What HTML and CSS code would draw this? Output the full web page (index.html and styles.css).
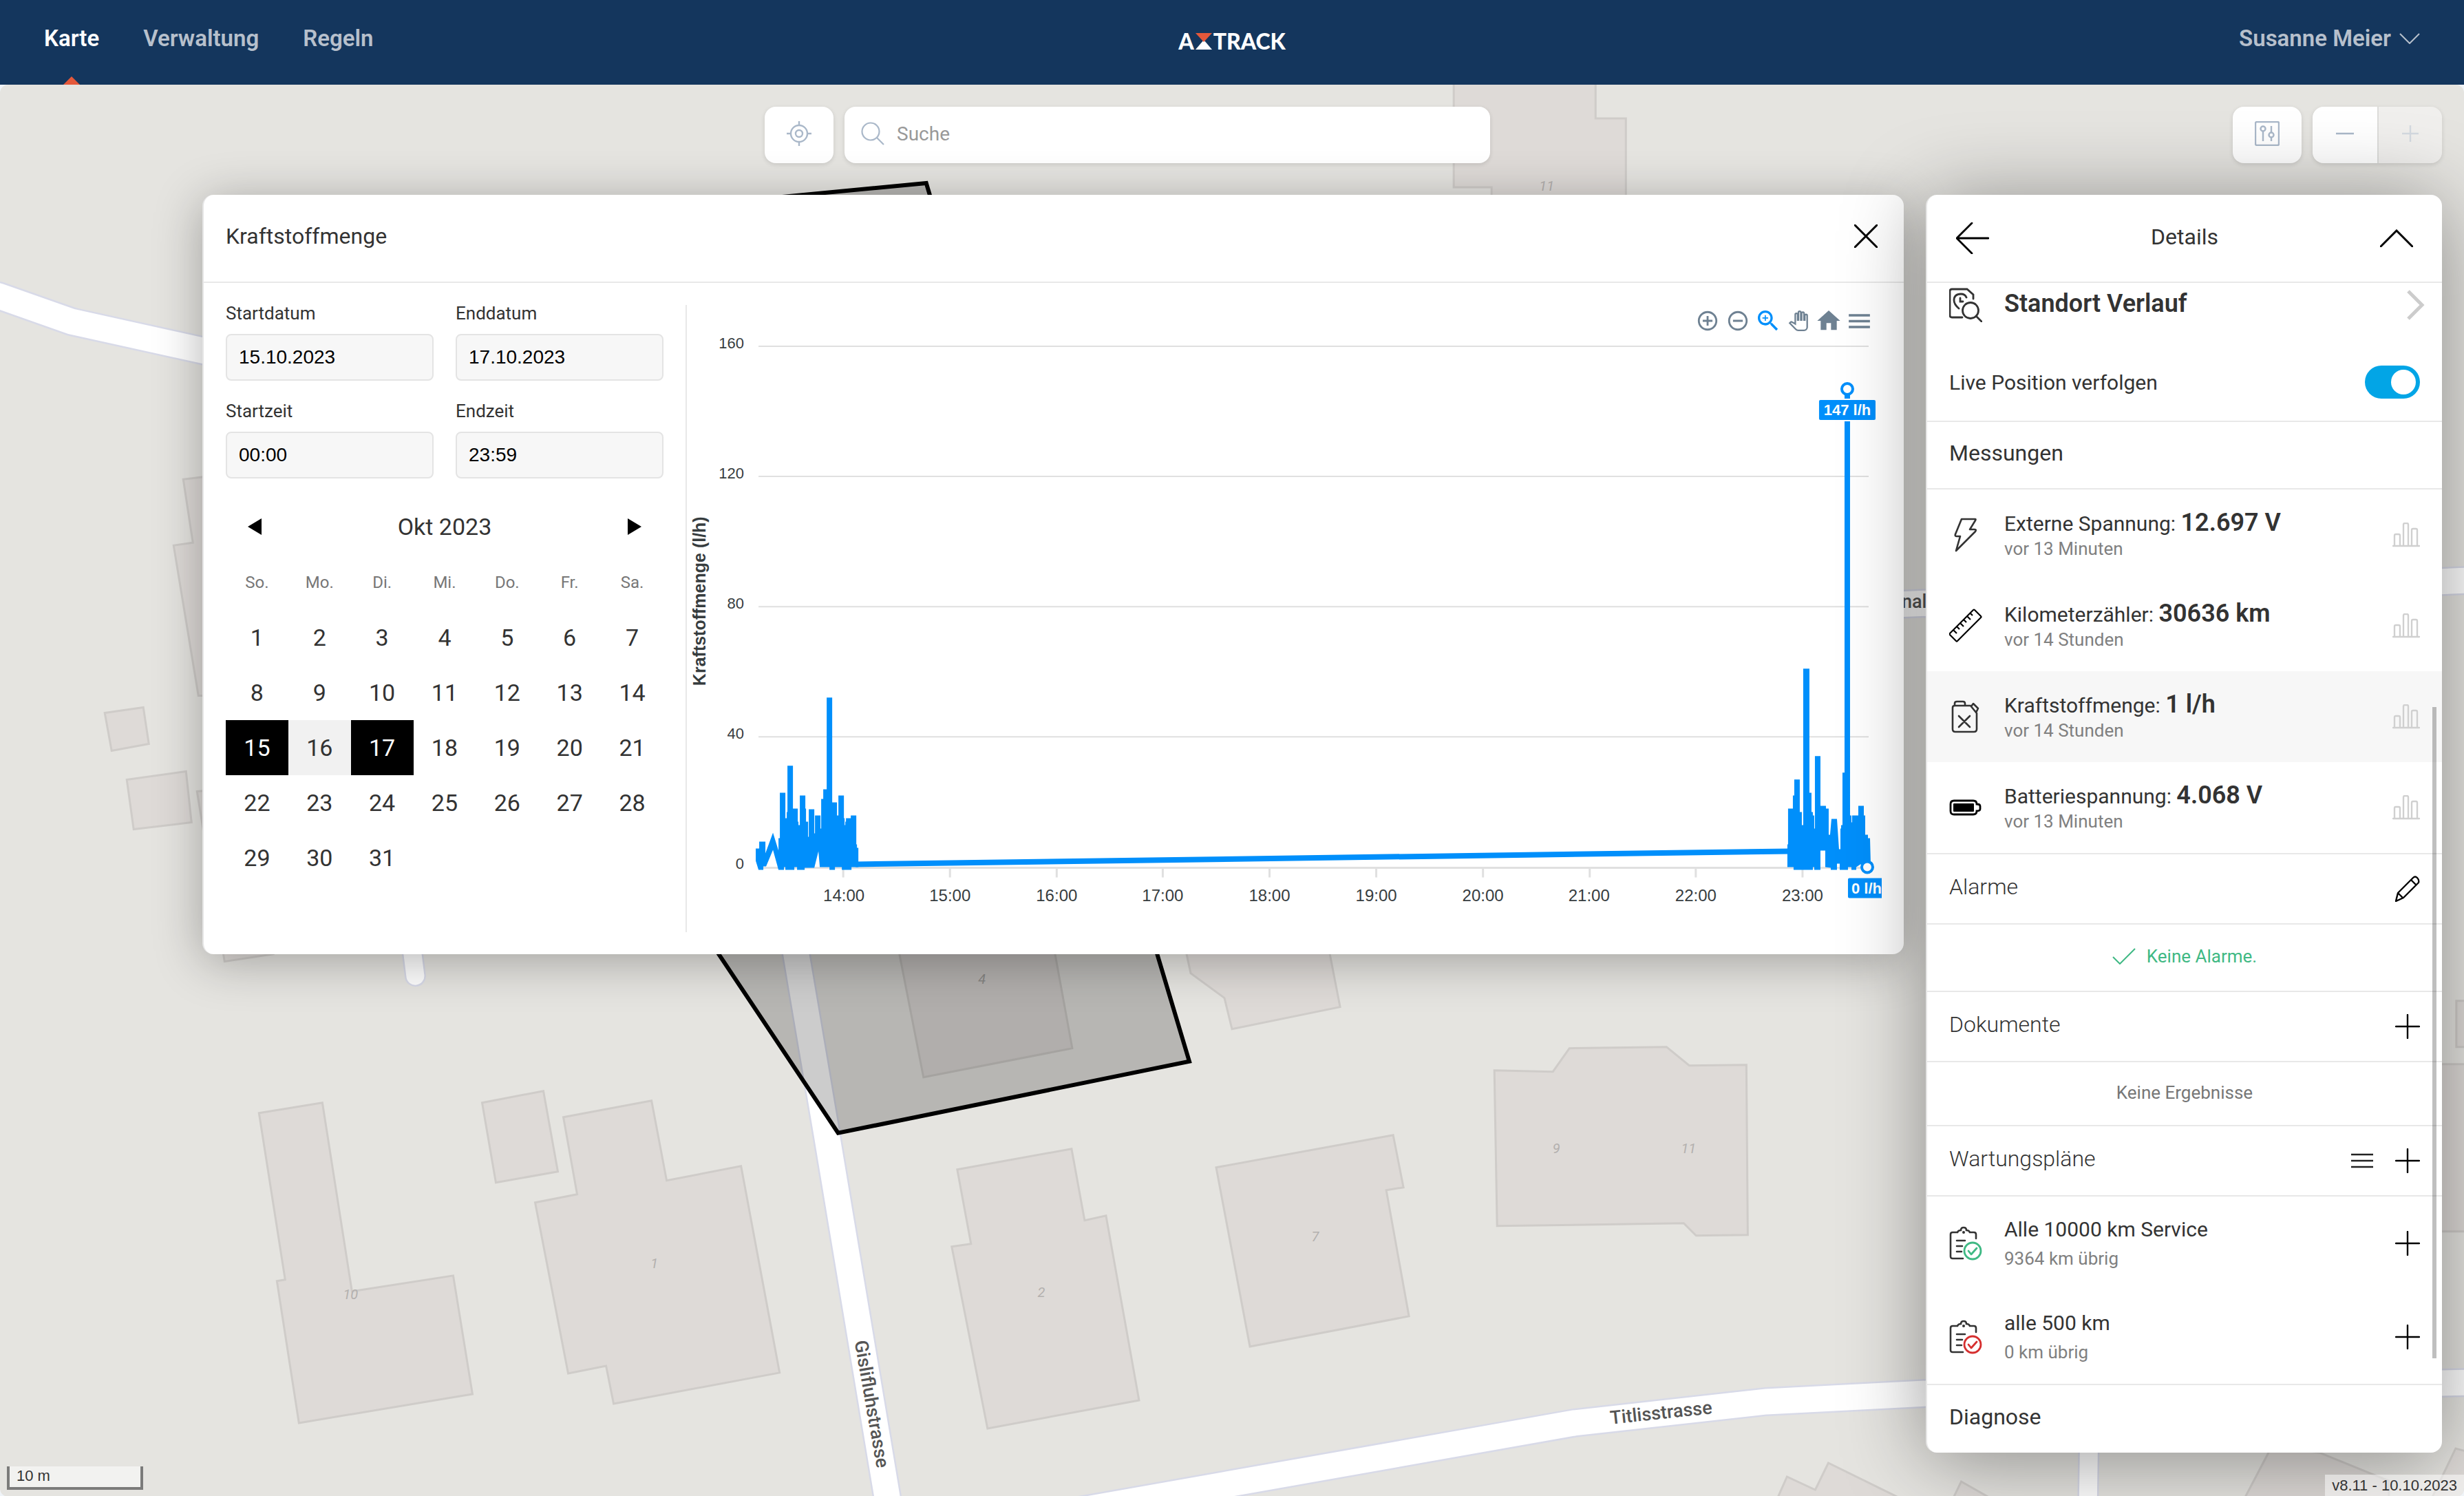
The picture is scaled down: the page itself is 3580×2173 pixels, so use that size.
FILE: index.html
```html
<!DOCTYPE html>
<html lang="de">
<head>
  <meta charset="UTF-8">
  <meta name="viewport" content="width=device-width, initial-scale=1">
  <title>AXTRACK</title>
  <link rel="stylesheet" href="styles.css">
</head>
<body>

<!-- icons used more than once -->
<svg class="sprite" aria-hidden="true">
  <symbol id="icon-plus" viewBox="0 0 36 36"><path d="M18 1v34M1 18h34" fill="none" stroke="currentColor" stroke-width="2.4" stroke-linecap="round"/></symbol>
  <symbol id="icon-bars" viewBox="0 0 40 36"><path d="M1 34h38M3 33V19q0-2 2-2h4q2 0 2 2v14M16 33V3q0-2 2-2h3q2 0 2 2v30M28 33V11q0-2 2-2h4q2 0 2 2v22" fill="none" stroke="currentColor" stroke-width="2.4" stroke-linecap="round"/></symbol>
  <symbol id="icon-clipboard" viewBox="0 0 48 50"><path d="M20 47H5q-3 0-3-3V12q0-3 3-3h7q1-3 5-3 0-4 4-4t4 4q4 0 5 3h6q3 0 3 3v6M11 21h12M11 29h8M11 37h7" fill="none" stroke="#333" stroke-width="2.6" stroke-linecap="round"/><circle cx="21" cy="9" r="2" fill="#333"/><circle cx="34" cy="36" r="12" fill="#fff" stroke="currentColor" stroke-width="2.8"/><path d="M28 36l4 5 8-9" fill="none" stroke="currentColor" stroke-width="2.8" stroke-linecap="round" stroke-linejoin="round"/></symbol>
</svg>

<header class="topbar">
  <nav class="nav">
    <a class="nav-link active" href="#karte">Karte</a>
    <a class="nav-link" href="#verwaltung">Verwaltung</a>
    <a class="nav-link" href="#regeln">Regeln</a>
  </nav>
  <a class="logo" href="#" aria-label="AXTRACK">
    <span>A</span>
    <svg width="24" height="24" viewBox="0 0 24 24"><path d="M0 24h24L12 10z" fill="#fff"/><path d="M0 0h24L12 13z" fill="#e4583a"/></svg>
    <span>TRACK</span>
  </a>
  <button class="user">Susanne Meier
    <svg width="30" height="16" viewBox="0 0 30 16"><path d="M1 1l14 14L29 1" fill="none" stroke="currentColor" stroke-width="2"/></svg>
  </button>
</header>

<main class="map-view">
  <svg class="map" viewBox="0 123 3580 2050" preserveAspectRatio="xMidYMid slice" aria-hidden="true">
    <rect y="123" width="3580" height="2050" fill="#e5e4e0"/>
    <!-- Gebäude -->
    <g class="building">
      <path d="M2112 100V272H2167V500H2362V172H2318V100z"/>
      <path d="M267 696L400 680V1010H289L253 792 281 788z"/>
      <path d="M287 1149L400 1140 398 1385 327 1396z"/>
      <path d="M153 1035L209 1027 217 1080 163 1090z"/>
      <path d="M185 1132L271 1120 279 1194 195 1204z"/>
      <path d="M377 1616L469 1601 512 1875 659 1852 687 2024 435 2066 403 1860 415 1858z"/>
      <path d="M701 1601L790 1584 811 1701 721 1717z"/>
      <path d="M819 1622L947 1598 969 1714 1077 1693 1133 1993 892 2038 881 1983 826 1994 778 1746 839 1734z"/>
      <path d="M1300 1340L1307 1385 1342 1564 1558 1522 1533 1385 1525 1340z"/>
      <path d="M1715 1340L1724 1385 1730 1413 1779 1449 1790 1494 1947 1462 1932 1385 1925 1340z"/>
      <path d="M1391 1698L1557 1668 1576 1772 1607 1765 1655 2033 1435 2074 1383 1810 1411 1806z"/>
      <path d="M1767 1695L2024 1648 2039 1724 2014 1728 2047 1911 1816 1955z"/>
      <path d="M2171 1554L2256 1556 2280 1522 2421 1520 2454 1547 2537 1546 2539 1793 2464 1794 2446 1776 2175 1780z"/>
      <path d="M2580 2180L2596 2144 2637 2163 2656 2124 2770 2180z"/>
      <path d="M2835 2180L2849 2151 2900 2180z"/>
      <path d="M3258 2180L3300 2100 3369 2109 3470 2150 3470 2180z"/>
      <path d="M3530 2180L3567 2103 3600 2112V2180z"/>
      <path d="M3568 1453H3600V1520H3568z"/>
      <path d="M3500 1545H3600V1788H3500z"/>
    </g>
    <!-- Strassen -->
    <g class="road-edge">
      <path d="M-20 425L0 430 105 467 295 509 400 532M2700 880L3600 842M1500 2205L2287 2066 2566 2035 2799 2023 3600 2007M1140 1280L1157 1385 1201 1645 1292 2190"/>
      <path class="narrow" d="M590 1320L600 1385 604 1417M3035 2060L3033 2190"/>
    </g>
    <g class="road">
      <path d="M-20 425L0 430 105 467 295 509 400 532M2700 880L3600 842M1500 2205L2287 2066 2566 2035 2799 2023 3600 2007M1140 1280L1157 1385 1201 1645 1292 2190"/>
      <path class="narrow" d="M590 1320L600 1385 604 1417M3035 2060L3033 2190"/>
    </g>
    <path class="geofence" d="M1346 266L1728 1541 1218 1645 360 360z"/>
    <g class="house-number">
      <text x="2247" y="277">11</text>
      <text x="510" y="1886">10</text>
      <text x="951" y="1841">1</text>
      <text x="1427" y="1428" class="inside">4</text>
      <text x="1513" y="1883">2</text>
      <text x="1911" y="1802">7</text>
      <text x="2261" y="1674">9</text>
      <text x="2453" y="1674">11</text>
    </g>
    <g class="street-name">
      <text transform="translate(1258 2040) rotate(80)">Gislifluhstrasse</text>
      <text transform="translate(2414 2060) rotate(-6)">Titlisstrasse</text>
      <text x="2788" y="883">nale</text>
    </g>
  </svg>

  <div class="toolbar">
    <span></span>
    <div class="toolbar-group">
      <button class="tool" aria-label="Standort">
        <svg width="36" height="36" viewBox="0 0 36 36" fill="none" stroke="currentColor" stroke-width="2.4"><circle cx="18" cy="18" r="12"/><circle cx="18" cy="18" r="5"/><path d="M18 0v6M18 30v6M0 18h6M30 18h6"/></svg>
      </button>
      <label class="search">
        <svg width="34" height="34" viewBox="0 0 34 34" fill="none" stroke="currentColor" stroke-width="2.2"><circle cx="14" cy="14" r="12.5"/><path d="M23 23l10 10"/></svg>
        <input type="text" placeholder="Suche" aria-label="Suche">
      </label>
    </div>
    <div class="toolbar-group">
      <button class="tool" aria-label="Filter">
        <svg width="36" height="36" viewBox="0 0 36 36" fill="none" stroke="currentColor" stroke-width="2.4"><rect x="1" y="1" width="34" height="34" rx="2"/><circle cx="12" cy="11" r="3.5"/><path d="M12 15v14M24 7v9M24 24v5"/><circle cx="24" cy="20" r="3.5"/></svg>
      </button>
      <div class="zoom">
        <button aria-label="Verkleinern"><svg width="26" height="26" viewBox="0 0 26 26"><path d="M0 13h26" stroke="currentColor" stroke-width="2.4"/></svg></button>
        <button aria-label="Vergrössern" disabled><svg width="24" height="24" viewBox="0 0 24 24"><path d="M0 12h24M12 0v24" stroke="currentColor" stroke-width="2.4"/></svg></button>
      </div>
    </div>
  </div>

  <div class="workspace">
    <section class="dialog">
      <div class="dialog-head">
        <h2>Kraftstoffmenge</h2>
        <button class="icon-btn" aria-label="Schliessen"><svg width="34" height="34" viewBox="0 0 34 34"><path d="M1 1l32 32M33 1L1 33" stroke="currentColor" stroke-width="3" stroke-linecap="round"/></svg></button>
      </div>
      <div class="dialog-body">
        <div class="range">
          <div class="fields">
            <label for="startDatum">Startdatum<input type="text" id="startDatum" value="15.10.2023"></label>
            <label for="endDatum">Enddatum<input type="text" id="endDatum" value="17.10.2023"></label>
            <label for="startZeit">Startzeit<input type="text" id="startZeit" value="00:00"></label>
            <label for="endZeit">Endzeit<input type="text" id="endZeit" value="23:59"></label>
          </div>
          <div class="month">
            <button class="icon-btn" aria-label="Vorheriger Monat"><svg width="20" height="24" viewBox="0 0 20 24"><path d="M20 0v24L0 12z"/></svg></button>
            <span>Okt 2023</span>
            <button class="icon-btn" aria-label="Nächster Monat"><svg width="20" height="24" viewBox="0 0 20 24"><path d="M0 0v24l20-12z"/></svg></button>
          </div>
          <table class="calendar">
            <thead>
              <tr><th>So.</th><th>Mo.</th><th>Di.</th><th>Mi.</th><th>Do.</th><th>Fr.</th><th>Sa.</th></tr>
            </thead>
            <tbody>
              <tr><td><button>1</button></td><td><button>2</button></td><td><button>3</button></td><td><button>4</button></td><td><button>5</button></td><td><button>6</button></td><td><button>7</button></td></tr>
              <tr><td><button>8</button></td><td><button>9</button></td><td><button>10</button></td><td><button>11</button></td><td><button>12</button></td><td><button>13</button></td><td><button>14</button></td></tr>
              <tr><td><button class="selected">15</button></td><td><button class="between">16</button></td><td><button class="selected">17</button></td><td><button>18</button></td><td><button>19</button></td><td><button>20</button></td><td><button>21</button></td></tr>
              <tr><td><button>22</button></td><td><button>23</button></td><td><button>24</button></td><td><button>25</button></td><td><button>26</button></td><td><button>27</button></td><td><button>28</button></td></tr>
              <tr><td><button>29</button></td><td><button>30</button></td><td><button>31</button></td><td></td><td></td><td></td><td></td></tr>
            </tbody>
          </table>
        </div>

        <div class="chart">
          <div class="chart-tools">
            <button aria-label="Zoom in"><svg width="34" height="34" viewBox="0 0 24 24"><path d="M13 7h-2v4H7v2h4v4h2v-4h4v-2h-4V7zm-1-5C6.48 2 2 6.48 2 12s4.48 10 10 10 10-4.48 10-10S17.52 2 12 2zm0 18c-4.41 0-8-3.59-8-8s3.59-8 8-8 8 3.59 8 8-3.59 8-8 8z"/></svg></button>
            <button aria-label="Zoom out"><svg width="34" height="34" viewBox="0 0 24 24"><path d="M7 11v2h10v-2H7zm5-9C6.48 2 2 6.48 2 12s4.48 10 10 10 10-4.48 10-10S17.52 2 12 2zm0 18c-4.41 0-8-3.59-8-8s3.59-8 8-8 8 3.59 8 8-3.59 8-8 8z"/></svg></button>
            <button class="on" aria-label="Auswahl zoomen"><svg width="40" height="40" viewBox="0 0 24 24"><path d="M15.5 14h-.79l-.28-.27C15.41 12.59 16 11.11 16 9.5 16 5.91 13.09 3 9.5 3S3 5.91 3 9.5 5.91 16 9.5 16c1.61 0 3.09-.59 4.23-1.57l.27.28v.79l5 4.99L20.49 19l-4.99-5zm-6 0C7.01 14 5 11.99 5 9.5S7.01 5 9.5 5 14 7.01 14 9.5 11.99 14 9.5 14z"/><path d="M12 10h-2v2H9v-2H7V9h2V7h1v2h2v1z"/></svg></button>
            <button aria-label="Verschieben"><svg width="30" height="30" viewBox="-1 -1 26 26"><path fill="#fff" stroke="currentColor" stroke-width="2" d="M23 5.5V20c0 2.2-1.8 4-4 4h-7.3c-1.08 0-2.1-.43-2.85-1.19L1 14.83s1.26-1.23 1.3-1.25c.22-.19.49-.29.79-.29.22 0 .42.06.6.16.04.01 4.31 2.46 4.31 2.46V4c0-.83.67-1.5 1.5-1.5S11 3.17 11 4v7h1V1.5c0-.83.67-1.5 1.5-1.5S15 .67 15 1.5V11h1V2.5c0-.83.67-1.5 1.5-1.5s1.5.67 1.5 1.5V11h1V5.5c0-.83.67-1.5 1.5-1.5s1.5.67 1.5 1.5z"/></svg></button>
            <button aria-label="Zurücksetzen"><svg width="40" height="40" viewBox="0 0 24 24"><path d="M10 20v-6h4v6h5v-8h3L12 3 2 12h3v8z"/></svg></button>
            <button aria-label="Menü"><svg width="41" height="41" viewBox="0 0 24 24"><path d="M3 18h18v-2H3v2zm0-5h18v-2H3v2zm0-7v2h18V6H3z"/></svg></button>
          </div>
          <svg class="plot" viewBox="999 479 1735 874" role="img" aria-label="Kraftstoffmenge (l/h)">
            <path class="grid" d="M1103 503H2715M1103 692H2715M1103 881H2715M1103 1070H2715"/>
            <path class="axis" d="M1103 1260H2715M1226 1260v14M1381 1260v14M1536 1260v14M1690 1260v14M1845 1260v14M2000 1260v14M2155 1260v14M2310 1260v14M2464 1260v14M2619 1260v14"/>
            <g class="y-label">
              <text x="1082" y="506">160</text>
              <text x="1082" y="695">120</text>
              <text x="1082" y="884">80</text>
              <text x="1082" y="1073">40</text>
              <text x="1082" y="1262">0</text>
            </g>
            <g class="x-label">
              <text x="1227" y="1309">14:00</text>
              <text x="1381" y="1309">15:00</text>
              <text x="1536" y="1309">16:00</text>
              <text x="1690" y="1309">17:00</text>
              <text x="1845" y="1309">18:00</text>
              <text x="2000" y="1309">19:00</text>
              <text x="2155" y="1309">20:00</text>
              <text x="2309" y="1309">21:00</text>
              <text x="2464" y="1309">22:00</text>
              <text x="2619" y="1309">23:00</text>
            </g>
            <text class="y-title" transform="translate(1026 873) rotate(-90)">Kraftstoffmenge (l/h)</text>
            <path class="series-line" d="M1244 1255L2600 1236"/>
            <path class="series" d="M1099 1250V1232H1104V1222H1113V1239L1124 1209 1132 1235V1217H1134V1151H1142V1188H1144V1179H1145V1112H1153V1174H1160V1193H1161V1198H1163V1155H1171V1174H1172V1193H1175V1215H1176V1175H1184V1210H1185V1184H1193V1203H1194V1160H1197V1146H1202V1013H1210V1165H1217V1184H1219V1155H1227V1188H1228V1198H1229V1193H1230V1188H1237V1184H1245V1226H1246V1231H1248V1259H1238V1263H1224V1259H1214V1263H1206V1259H1192L1190 1236 1184 1260H1170V1263H1159V1259H1155V1263H1142V1259H1140V1263H1132L1124 1234 1114 1258H1110V1263H1103z"/>
            <path class="series" d="M2597 1259V1226H2598V1174H2605V1155H2607V1132H2615V1179H2618V1198H2620V971H2629V1151H2632V1179H2634V1184H2636V1203H2637V1098H2645V1170H2653V1174H2657V1212H2659L2661 1189H2669L2672 1233H2674V1203H2675V1198H2677V1122H2680V566H2688V1184H2690V1194H2691V1184H2700V1170H2708V1184H2710V1212H2714V1217H2717L2718 1255 2703 1255 2697 1259V1263H2690V1259H2685V1263H2673V1254H2669V1263H2660V1260L2652 1259V1235H2645V1263H2636V1259H2634V1263H2606V1259z"/>
            <g class="marker">
              <circle cx="2684" cy="565" r="8"/>
              <rect x="2642" y="580" width="84" height="31" rx="3"/>
              <text x="2684" y="603">147 l/h</text>
              <circle cx="2713" cy="1259" r="8"/>
              <rect x="2684" y="1274" width="60" height="31" rx="3"/>
              <text x="2712" y="1298">0 l/h</text>
            </g>
          </svg>
        </div>
      </div>
    </section>

    <aside class="panel">
      <div class="panel-head">
        <button class="icon-btn" aria-label="Zurück"><svg width="48" height="46" viewBox="0 0 48 46" fill="none" stroke="currentColor" stroke-width="2.8" stroke-linecap="round"><path d="M23 1L1 23l22 22M1 23h46"/></svg></button>
        <h2>Details</h2>
        <button class="icon-btn" aria-label="Einklappen"><svg width="48" height="26" viewBox="0 0 48 26" fill="none" stroke="currentColor" stroke-width="3" stroke-linecap="round"><path d="M1 25L24 2l23 23"/></svg></button>
      </div>

      <a class="history" href="#verlauf">
        <svg width="48" height="50" viewBox="0 0 48 50" fill="none" stroke="#333" stroke-width="2.8" stroke-linecap="round"><path d="M19 43H4q-3 0-3-3V5q0-3 3-3h22l9 8v6M14 30q-7-6-7-12 0-9 10-9 6 0 8 5M16 15v5h4"/><circle cx="31" cy="33" r="11.5"/><path d="M39 41l8 8"/></svg>
        <span>Standort Verlauf</span>
        <svg class="arrow" width="28" height="44" viewBox="0 0 28 44"><path d="M3 2l20 20L3 42" fill="none" stroke="#ccc" stroke-width="5"/></svg>
      </a>
      <div class="live">
        <label for="live">Live Position verfolgen</label>
        <input type="checkbox" class="switch" id="live" checked>
      </div>

      <h3 class="section dark">Messungen</h3>
      <ul class="list">
        <li class="item">
          <svg width="48" height="50" viewBox="0 0 48 50" fill="none" stroke="#333" stroke-width="2.6" stroke-linejoin="round"><path d="M18 2h20q1 0 0 2l-8 13h7q3 0 1 3L10 48l6-21H11q-3 0-2-3z"/></svg>
          <div class="item-text"><p>Externe Spannung: <b>12.697 V</b></p><small>vor 13 Minuten</small></div>
          <button class="icon-btn muted" aria-label="Diagramm Externe Spannung"><svg width="40" height="36"><use href="#icon-bars"/></svg></button>
        </li>
        <li class="item">
          <svg width="48" height="50" viewBox="0 0 48 50" fill="none" stroke="#000" stroke-width="2.2" stroke-linejoin="round"><path d="M1 36L35 2q1-1 2 0l9 9q1 1 0 2L12 47q-1 1-2 0l-9-9q-1-1 0-2zM6 31l5 5M11 26l4 4M16 21l5 5M21 16l4 4M26 11l5 5M31 7l3 3"/></svg>
          <div class="item-text"><p>Kilometerzähler: <b>30636 km</b></p><small>vor 14 Stunden</small></div>
          <button class="icon-btn muted" aria-label="Diagramm Kilometerzähler"><svg width="40" height="36"><use href="#icon-bars"/></svg></button>
        </li>
        <li class="item current">
          <svg width="48" height="50" viewBox="0 0 48 50" fill="none" stroke="#333" stroke-width="2.6" stroke-linecap="round" stroke-linejoin="round"><path d="M31 9H8q-3 0-3 3v31q0 4 4 4h27q4 0 4-4V20zM8 8V6q0-3 3-3h9q3 0 3 3v2M14 24l16 16M30 24L14 40M32 10l3-4 7 7-3 6"/></svg>
          <div class="item-text"><p>Kraftstoffmenge: <b>1 l/h</b></p><small>vor 14 Stunden</small></div>
          <button class="icon-btn muted" aria-label="Diagramm Kraftstoffmenge"><svg width="40" height="36"><use href="#icon-bars"/></svg></button>
        </li>
        <li class="item">
          <svg width="48" height="50" viewBox="0 0 48 50"><path d="M7 15h28q5 0 5 5 5 0 5 3v4q0 3-5 3 0 5-5 5H7q-5 0-5-5V20q0-5 5-5z" fill="none" stroke="#000" stroke-width="2.8"/><rect x="6" y="19" width="30" height="12" rx="1"/></svg>
          <div class="item-text"><p>Batteriespannung: <b>4.068 V</b></p><small>vor 13 Minuten</small></div>
          <button class="icon-btn muted" aria-label="Diagramm Batteriespannung"><svg width="40" height="36"><use href="#icon-bars"/></svg></button>
        </li>
      </ul>

      <div class="section">
        <h3>Alarme</h3>
        <button class="icon-btn" aria-label="Alarme bearbeiten"><svg width="36" height="38" viewBox="0 0 36 38" fill="none" stroke="currentColor" stroke-width="2.4" stroke-linejoin="round"><path d="M1 37l3-12L26 3q3-3 6 0t2 7L12 32zM4 25l8 8M23 6l8 8"/></svg></button>
      </div>
      <p class="note ok"><svg width="34" height="24" viewBox="0 0 34 24"><path d="M1 13l10 10L33 1" fill="none" stroke="currentColor" stroke-width="2"/></svg>Keine Alarme.</p>

      <div class="section">
        <h3>Dokumente</h3>
        <button class="icon-btn" aria-label="Dokument hinzufügen"><svg width="36" height="36"><use href="#icon-plus"/></svg></button>
      </div>
      <p class="note">Keine Ergebnisse</p>

      <div class="section">
        <h3>Wartungspläne</h3>
        <button class="icon-btn" aria-label="Liste"><svg width="32" height="22" viewBox="0 0 32 22"><path d="M0 2h32M0 11h32M0 20h32" stroke="#222" stroke-width="2.4"/></svg></button>
        <button class="icon-btn" aria-label="Wartungsplan hinzufügen"><svg width="36" height="36"><use href="#icon-plus"/></svg></button>
      </div>
      <ul class="list">
        <li class="item plan">
          <svg class="green" width="48" height="50"><use href="#icon-clipboard"/></svg>
          <div class="item-text"><p>Alle 10000 km Service</p><small>9364 km übrig</small></div>
          <button class="icon-btn" aria-label="Service erfassen"><svg width="36" height="36"><use href="#icon-plus"/></svg></button>
        </li>
        <li class="item plan">
          <svg class="red" width="48" height="50"><use href="#icon-clipboard"/></svg>
          <div class="item-text"><p>alle 500 km</p><small>0 km übrig</small></div>
          <button class="icon-btn" aria-label="Service erfassen"><svg width="36" height="36"><use href="#icon-plus"/></svg></button>
        </li>
      </ul>

      <h3 class="section dark last">Diagnose</h3>
      <span class="scrollbar"></span>
    </aside>
  </div>

  <div class="scale">10 m</div>
  <div class="version">v8.11 - 10.10.2023</div>
</main>

</body>
</html>
```
FILE: styles.css
```css
* {
  box-sizing: border-box;
}
body {
  margin: 0;
  min-height: 100vh;
  display: flex;
  flex-direction: column;
  font-family: Roboto, sans-serif;
  font-size: 30px;
  color: #333;
  background: #f0f4f8;
}
h2, h3, p, ul {
  margin: 0;
  padding: 0;
  font-weight: 400;
}
ul {
  list-style: none;
}
a {
  color: inherit;
  text-decoration: none;
}
button {
  font: inherit;
  color: inherit;
  background: none;
  border: none;
  padding: 0;
  cursor: pointer;
}
svg {
  display: block;
  flex: none;
}
.sprite {
  position: absolute;
  width: 0;
  height: 0;
}

/* Kopfzeile */
.topbar {
  height: 123px;
  padding: 0 64px;
  display: grid;
  grid-template-columns: 1fr auto 1fr;
  align-items: center;
  background: #14365d;
  color: #b7c0cc;
  font-size: 33px;
  font-weight: 600;
}
.nav {
  display: flex;
  gap: 64px;
  height: 123px;
}
.nav-link {
  position: relative;
  line-height: 111px;
}
.nav-link.active {
  color: #fff;
}
.nav-link.active::after {
  content: "";
  position: absolute;
  bottom: 0;
  left: 50%;
  margin-left: -12px;
  border: 12px solid transparent;
  border-top: 0;
  border-bottom-color: #e4583a;
}
.logo {
  display: flex;
  align-items: center;
  gap: 2px;
  padding-bottom: 4px;
  color: #fff;
  font-family: Lato, sans-serif;
  font-size: 32px;
  font-weight: 900;
  line-height: 36px;
}
.user {
  justify-self: end;
  display: flex;
  align-items: center;
  gap: 12px;
  padding-bottom: 12px;
}

/* Karte */
.map-view {
  position: relative;
  flex: 1;
  padding: 32px 32px 64px;
  border-radius: 12px;
  overflow: hidden;
}
.map {
  position: absolute;
  inset: 0;
  width: 100%;
  height: 100%;
}
.building {
  fill: #dedad7;
  stroke: #cfccc9;
  stroke-width: 3;
}
.road, .road-edge {
  fill: none;
  stroke: #fff;
  stroke-width: 37;
  stroke-linecap: round;
}
.road .narrow {
  stroke-width: 26;
}
.road-edge {
  stroke: #d8dae8;
  stroke-width: 42;
}
.road-edge .narrow {
  stroke-width: 31;
}
.geofence {
  fill: rgba(0, 0, 0, 0.2);
  stroke: #000;
  stroke-width: 6;
}
.house-number {
  font-size: 20px;
  font-style: italic;
  fill: #b3b0ae;
  text-anchor: middle;
}
.house-number .inside {
  fill: #858482;
}
.street-name {
  font-size: 27px;
  font-weight: 500;
  fill: #555;
  text-anchor: middle;
}

/* Werkzeuge über der Karte */
.toolbar {
  position: relative;
  display: flex;
  justify-content: space-between;
  margin-bottom: 46px;
}
.toolbar-group {
  display: flex;
  gap: 16px;
}
.tool, .search, .zoom {
  height: 82px;
  border-radius: 16px;
  background: #fff;
  color: #aab8c9;
  box-shadow: 0 2px 6px rgba(0, 0, 0, 0.12);
}
.tool {
  width: 100px;
  display: flex;
  justify-content: center;
  align-items: center;
  padding-bottom: 4px;
}
.search {
  width: 26.2vw;
  display: flex;
  align-items: center;
  gap: 16px;
  padding: 0 24px 4px;
}
.search input {
  flex: 1;
  border: none;
  outline: none;
  font: inherit;
  font-size: 28px;
  background: none;
}
.search input::placeholder {
  color: #999;
}
.zoom {
  display: flex;
  overflow: hidden;
  background: none;
}
.zoom button {
  width: 94px;
  display: flex;
  justify-content: center;
  align-items: center;
  padding-bottom: 4px;
  background: #fff;
}
.zoom button:disabled {
  color: #d3d9e0;
  background: #f0efed;
  border-left: 2px solid #dcdcda;
}

.workspace {
  position: relative;
  display: flex;
  align-items: flex-start;
  gap: 32px;
}
.icon-btn {
  display: flex;
  color: #000;
}
.icon-btn.muted {
  color: #d0d0d0;
}

/* Dialog mit Diagramm */
.dialog {
  flex: 1;
  margin-left: 262px;
  border-left: 2px solid #e6e6e6;
  border-radius: 16px;
  background: #fff;
  box-shadow: 0 10px 70px rgba(0, 0, 0, 0.3);
}
.dialog-head, .panel-head {
  height: 128px;
  display: flex;
  justify-content: space-between;
  align-items: center;
  padding: 0 38px 6px 32px;
  border-bottom: 2px solid #e8e8e8;
}
.dialog-head h2, .panel-head h2 {
  font-size: 32px;
}
.dialog-body {
  display: flex;
  padding: 32px;
}
.range {
  width: 668px;
  padding-right: 32px;
}
.fields {
  display: grid;
  grid-template-columns: 1fr 1fr;
  gap: 32px;
  font-size: 26px;
  line-height: 24px;
}
.fields input {
  display: block;
  width: 100%;
  height: 68px;
  margin-top: 18px;
  padding: 0 17px;
  border: 2px solid #e4e4e4;
  border-radius: 8px;
  background: #f7f7f7;
  font-family: "Liberation Sans", sans-serif;
  font-size: 28px;
  color: #000;
}
.month {
  display: flex;
  justify-content: space-between;
  align-items: center;
  height: 74px;
  margin-top: 33px;
  padding: 0 32px;
  font-size: 34px;
}
.calendar {
  width: 100%;
  table-layout: fixed;
  border-collapse: collapse;
}
.calendar th {
  height: 84px;
  padding: 4px 0 0;
  font-size: 24px;
  font-weight: 400;
  color: #777;
}
.calendar td {
  height: 80px;
  padding: 0;
}
.calendar button {
  display: block;
  width: 100%;
  height: 80px;
  font-size: 34px;
}
.calendar .selected {
  background: #000;
  color: #fff;
}
.calendar .between {
  background: #f1f1f1;
}

.chart {
  flex: 1;
  min-width: 0;
  border-left: 2px solid #e8e8e8;
}
.chart-tools {
  height: 46px;
  display: flex;
  justify-content: flex-end;
  margin-bottom: -10px;
  padding-right: 11px;
}
.chart-tools button {
  width: 44px;
  display: flex;
  justify-content: center;
  align-items: center;
  color: #6e8192;
  fill: #6e8192;
}
.chart-tools .on {
  fill: #008ffb;
}
.plot {
  width: 100%;
  height: auto;
  font-family: "Liberation Sans", sans-serif;
  font-size: 24px;
  fill: #373d3f;
  text-anchor: middle;
}
.grid {
  stroke: #e0e0e0;
  stroke-width: 2;
}
.axis {
  stroke: #e0e0e0;
  stroke-width: 3;
}
.y-label {
  font-size: 22px;
  text-anchor: end;
}
.y-title {
  font-size: 25px;
  font-weight: 700;
}
.series {
  fill: #008ffb;
}
.series-line {
  stroke: #008ffb;
  stroke-width: 8;
}
.marker circle {
  fill: #fff;
  stroke: #008ffb;
  stroke-width: 4;
}
.marker rect {
  fill: #008ffb;
  stroke: #fff;
  stroke-width: 2;
}
.marker text {
  fill: #fff;
  font-size: 22px;
  font-weight: 700;
}

/* Detailansicht */
.panel {
  position: relative;
  width: 750px;
  border-left: 2px solid #e6e6e6;
  border-radius: 16px;
  background: #fff;
  box-shadow: 0 10px 120px rgba(0, 0, 0, 0.4);
}
.panel-head {
  padding: 0 42px;
}
.panel-head h2 {
  padding-bottom: 4px;
}
.history {
  display: flex;
  align-items: center;
  height: 64px;
  margin-bottom: 24px;
  padding: 0 24px 0 32px;
  font-size: 36px;
  font-weight: 600;
}
.history span {
  flex: 1;
  padding: 0 0 4px 32px;
}
.live {
  display: flex;
  justify-content: space-between;
  align-items: center;
  height: 114px;
  padding: 0 32px;
  border-bottom: 2px solid #e8e8e8;
}
.switch {
  appearance: none;
  width: 80px;
  height: 48px;
  margin: 0;
  padding: 6px;
  border-radius: 24px;
  background: #ccc;
}
.switch::before {
  content: "";
  display: block;
  width: 36px;
  height: 36px;
  border-radius: 50%;
  background: #fff;
}
.switch:checked {
  background: #02a5e6;
}
.switch:checked::before {
  margin-left: auto;
}
.section {
  display: flex;
  align-items: center;
  gap: 32px;
  height: 102px;
  padding: 0 32px;
  border-bottom: 2px solid #e8e8e8;
  font-size: 32px;
}
.section h3 {
  flex: 1;
  padding-bottom: 6px;
  font-size: 32px;
  font-weight: 300;
}
.section.dark {
  height: 98px;
  padding-bottom: 6px;
}
.section.last {
  border-bottom: none;
}
.list {
  border-bottom: 2px solid #e8e8e8;
}
.item {
  display: flex;
  align-items: center;
  height: 132px;
  padding: 0 32px;
}
.item.current {
  background: #f7f7f7;
}
.item-text {
  flex: 1;
  padding-left: 32px;
}
.item p {
  line-height: 38px;
}
.item b {
  font-size: 36px;
  font-weight: 600;
}
.item small {
  display: block;
  font-size: 26px;
  line-height: 34px;
  color: #808080;
}
.item.plan {
  height: 136px;
}
.item.plan small {
  padding-top: 6px;
}
.green {
  color: #3fb984;
}
.red {
  color: #d62f2f;
}
.note {
  display: flex;
  justify-content: center;
  align-items: center;
  gap: 16px;
  height: 93px;
  padding-bottom: 4px;
  border-bottom: 2px solid #e8e8e8;
  font-size: 26px;
  color: #777;
}
.note.ok {
  height: 98px;
  color: #3fb984;
}
.scrollbar {
  position: absolute;
  top: 744px;
  right: 8px;
  width: 6px;
  height: 946px;
  background: rgba(0, 0, 0, 0.25);
}

.scale, .version {
  position: absolute;
  bottom: 0;
  font-family: "Liberation Sans", sans-serif;
  font-size: 22px;
  background: rgba(255, 255, 255, 0.5);
}
.scale {
  left: 10px;
  bottom: 10px;
  width: 198px;
  height: 34px;
  padding-left: 10px;
  line-height: 28px;
  border: 4px solid #7b7b7a;
  border-top: 0;
}
.version {
  right: 0;
  padding: 0 10px;
  line-height: 32px;
}
```
